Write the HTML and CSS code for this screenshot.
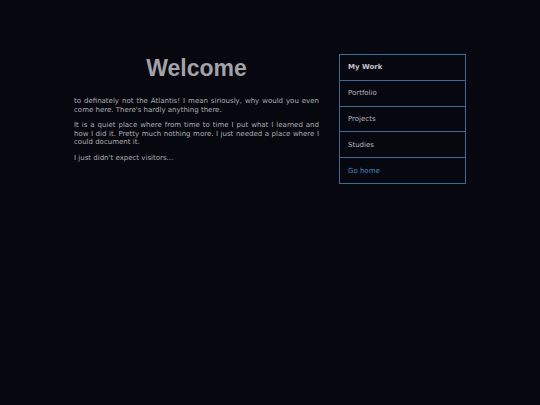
FILE: index.html
```html
<!DOCTYPE html>
<html>
<head>
<meta charset="utf-8">
<link rel="stylesheet" href="styles.css">
</head>
<body>
<div class="page">
  <main class="content">
    <h1 class="title">Welcome</h1>
    <p class="text">to definately not the Atlantis! I mean siriously, why would you even come here. There's hardly anything there.</p>
    <p class="text">It is a quiet place where from time to time I put what I learned and how I did it. Pretty much nothing more. I just needed a place where I could document it.</p>
    <p class="text">I just didn't expect visitors...</p>
  </main>
  <nav class="sidebar">
    <div class="item head">My Work</div>
    <div class="item">Portfolio</div>
    <div class="item">Projects</div>
    <div class="item">Studies</div>
    <div class="item link">Go home</div>
  </nav>
</div>
</body>
</html>
```
FILE: styles.css
```css
html, body {
  margin: 0;
  padding: 0;
  background: #07080f;
  height: 100%;
}
body {
  font-family: "DejaVu Sans", Verdana, sans-serif;
}
.page {
  width: 392px;
  margin: 0 auto;
  padding-top: 54px;
  display: flex;
  gap: 20px;
  align-items: flex-start;
}
.content {
  width: 245px;
}
.title {
  margin: 0 0 15px;
  padding-top: 1px;
  text-align: center;
  font-family: "Liberation Sans", Arial, sans-serif;
  font-weight: bold;
  font-size: 23px;
  line-height: 27px;
  color: #a2a2a8;
}
.text {
  margin: 0 0 7px;
  font-size: 7px;
  line-height: 8.5px;
  color: #aeaeb4;
  text-align: justify;
}
.sidebar {
  width: 127px;
  border: 1px solid #3d6a96;
  border-bottom: 0;
  box-sizing: border-box;
}
.item {
  height: 24.8px;
  border-bottom: 1px solid #3d6a96;
  padding-left: 8px;
  display: flex;
  align-items: center;
  font-size: 7px;
  color: #b8b8c0;
}
.item.head {
  font-weight: bold;
  color: #c4c4cc;
}
.item.link {
  color: #4a86c0;
}
```
